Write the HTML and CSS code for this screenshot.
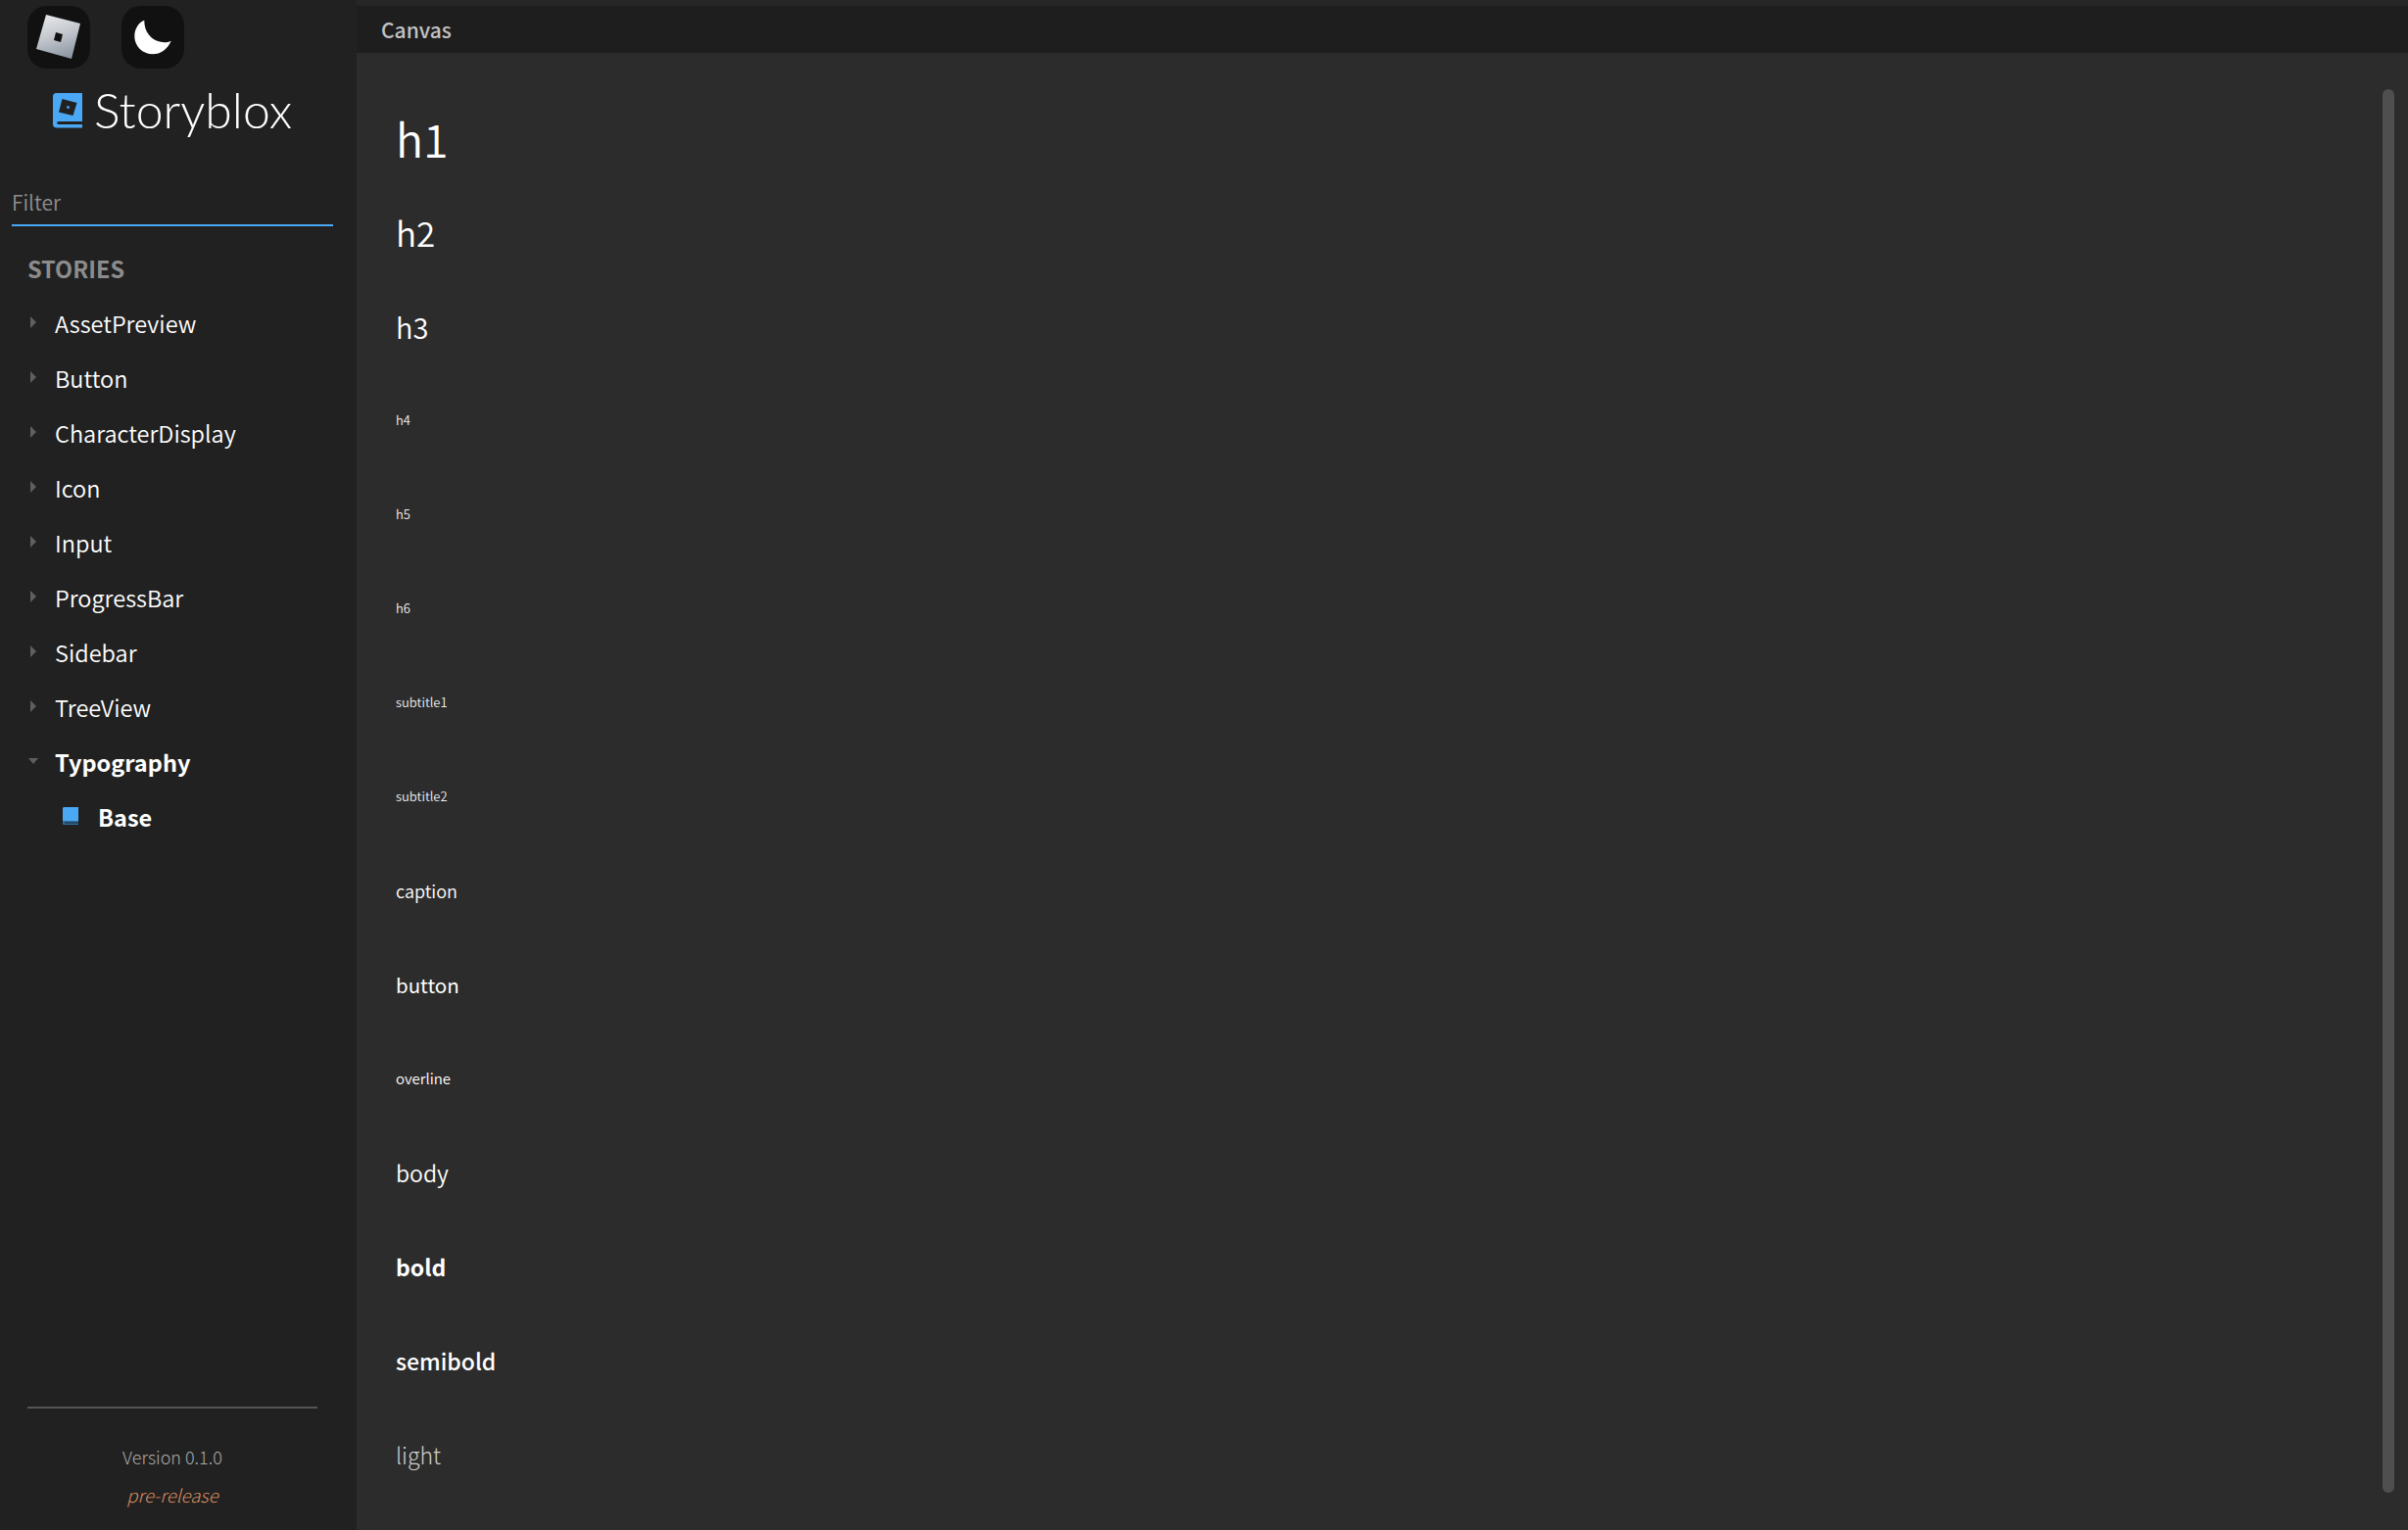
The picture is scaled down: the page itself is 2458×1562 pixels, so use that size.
FILE: index.html
```html
<!DOCTYPE html>
<html lang="en">
<head>
<meta charset="utf-8">
<title>Storyblox</title>
<link rel="stylesheet" href="styles.css">
</head>
<body>
<div class="app">
  <aside class="sidebar">
    <div class="toolbar">
      <button class="icon-btn" aria-label="Roblox">
        <svg width="64" height="64" viewBox="0 0 64 64">
          <defs><linearGradient id="metal" x1="0.2" y1="0" x2="0.5" y2="1"><stop offset="0" stop-color="#e6e7e9"/><stop offset="0.5" stop-color="#c4c8cd"/><stop offset="1" stop-color="#8f99a5"/></linearGradient></defs>
          <path fill="url(#metal)" fill-rule="evenodd" d="M19 9 54 18 45 54 9 44ZM29 27 27 35 34 37 36 29Z"/>
        </svg>
      </button>
      <button class="icon-btn" aria-label="Toggle theme">
        <svg width="64" height="64" viewBox="0 0 64 64">
          <path fill="#fff" d="M23.300 14.700C17 17 13.300 24 13.300 31 13.300 41 21.500 49.300 32 49.300 40 49.300 47 44 50.700 35.700 47 37.500 43 37.500 40 36.800 30 35 23 26 23.300 14.700Z"/>
        </svg>
      </button>
    </div>
    <div class="brand">
      <svg width="30" height="36" viewBox="0 0 30 36">
        <path fill="#4aa8f5" d="M3 0H30V29H6C3.500 29 3.500 32 6 32H30V35.500H4C1.500 35.500 0 34 0 32V3C0 1.500 1.500 0 3 0Z"/>
        <path fill="#212121" fill-rule="evenodd" d="M9.500 6 24.500 10 20.500 23 6 19.500ZM14.500 13 14 15.500 16.500 16 17 13.500Z"/>
      </svg>
      <span class="brand-name">Storyblox</span>
    </div>
    <div class="filter">Filter</div>
    <div class="section-title">STORIES</div>
    <ul class="tree">
      <li class="tree-item"><span class="caret"></span>AssetPreview</li>
      <li class="tree-item"><span class="caret"></span>Button</li>
      <li class="tree-item"><span class="caret"></span>CharacterDisplay</li>
      <li class="tree-item"><span class="caret"></span>Icon</li>
      <li class="tree-item"><span class="caret"></span>Input</li>
      <li class="tree-item"><span class="caret"></span>ProgressBar</li>
      <li class="tree-item"><span class="caret"></span>Sidebar</li>
      <li class="tree-item"><span class="caret"></span>TreeView</li>
      <li class="tree-item is-open"><span class="caret"></span>Typography</li>
      <li class="tree-item is-story">
        <svg class="story-icon" width="16" height="18" viewBox="0 0 16 18">
          <path fill="#4aa8f5" d="M1.500 0H16V14H0V1.500C0 .5.5 0 1.500 0Z"/>
          <path fill="#2f6f9f" d="M0 14H16V18H1.500C.5 18 0 17.500 0 16.500ZM2 15.500V16.500H16V15.500Z"/>
        </svg>Base</li>
    </ul>
    <div class="footer">
      <div class="version">Version 0.1.0</div>
      <div class="release">pre-release</div>
    </div>
  </aside>
  <main class="main">
    <header class="canvas-bar">Canvas</header>
    <section class="canvas">
      <div class="row t-h1">h1</div>
      <div class="row t-h2">h2</div>
      <div class="row t-h3">h3</div>
      <div class="row t-small">h4</div>
      <div class="row t-small">h5</div>
      <div class="row t-small">h6</div>
      <div class="row t-small">subtitle1</div>
      <div class="row t-small">subtitle2</div>
      <div class="row t-caption">caption</div>
      <div class="row t-button">button</div>
      <div class="row t-overline">overline</div>
      <div class="row t-body">body</div>
      <div class="row t-bold">bold</div>
      <div class="row t-semibold">semibold</div>
      <div class="row t-light">light</div>
    </section>
    <div class="scroll-thumb"></div>
  </main>
</div>
</body>
</html>
```
FILE: styles.css
```css
* { box-sizing: border-box; }
html, body { margin: 0; height: 100%; overflow: hidden; }
body {
  background: #212121;
  color: #fff;
  font-family: "Noto Sans CJK SC", "Noto Sans", sans-serif;
}
.app { display: flex; height: 1562px; }

.sidebar {
  width: 364px;
  flex: none;
  display: flex;
  flex-direction: column;
  background: #212121;
}
.toolbar { display: flex; gap: 32px; padding: 6px 0 0 28px; }
.icon-btn {
  width: 64px;
  height: 64px;
  padding: 0;
  border: 0;
  border-radius: 20px;
  background: #111;
  display: block;
}
.icon-btn svg { display: block; }
.brand {
  display: flex;
  align-items: center;
  gap: 12px;
  height: 56px;
  margin-top: 14px;
  padding-left: 54px;
}
.brand svg { flex: none; margin-top: 1px; }
.brand-name {
  font-family: Lato, sans-serif;
  font-weight: 300;
  font-size: 50px;
  line-height: 56px;
}
.filter {
  margin: 49px 24px 0 12px;
  height: 42px;
  border-bottom: 2px solid #4aa8f5;
  color: #8f8f8f;
  font-size: 21px;
  line-height: 34px;
  font-weight: 350;
}
.section-title {
  margin-top: 25px;
  padding-left: 28px;
  color: #8c8c8c;
  font-size: 23.5px;
  font-weight: 700;
  line-height: 36px;
}
.tree { list-style: none; margin: 10px 0 0; padding: 0; }
.tree-item {
  display: flex;
  align-items: center;
  height: 56px;
  padding-left: 31px;
  font-size: 23.5px;
  font-weight: 350;
}
.caret {
  width: 25px;
  height: 12px;
  flex: none;
  margin-top: -2px;
  position: relative;
}
.caret::before {
  content: "";
  display: block;
  width: 0;
  height: 0;
  border-left: 6px solid #5f5f5f;
  border-top: 6px solid transparent;
  border-bottom: 6px solid transparent;
}
.tree-item.is-open { font-weight: 700; }
.is-open .caret::before {
  margin: 3px 0 0 -2px;
  border-top: 6px solid #5f5f5f;
  border-left: 5.500px solid transparent;
  border-right: 5.500px solid transparent;
  border-bottom: 0;
}
.tree-item.is-story { font-weight: 700; padding-left: 64px; }
.story-icon { margin: -3px 20px 0 0; flex: none; }

.footer {
  margin: auto 40px 0 28px;
  height: 126px;
  border-top: 2px solid #555;
  text-align: center;
  font-size: 18px;
}
.version { margin-top: 31px; line-height: 36px; color: #aaa; font-weight: 300; }
.release { margin-top: 3px; line-height: 36px; color: #dc8f63; font-style: italic; font-weight: 300; font-size: 18.5px; }

.main {
  flex: 1;
  min-width: 0;
  position: relative;
  display: flex;
  flex-direction: column;
  background: #2c2c2c;
  border-top: 6px solid #262626;
}
.canvas-bar {
  height: 48px;
  flex: none;
  padding-left: 25px;
  background: #1e1e1e;
  color: #c2c2c2;
  font-size: 21px;
  font-weight: 500;
  line-height: 48px;
}
.canvas { padding: 63px 0 0 40px; font-weight: 350; }
.row { height: 96px; line-height: 48px; }
.t-h1 { font-size: 46.5px; }
.t-h2 { font-size: 35px; }
.t-h3 { font-size: 29px; }
.t-small { font-size: 13px; color: #eee; }
.t-caption { font-size: 18px; }
.t-button { font-size: 20.5px; font-weight: 400; }
.t-overline { font-size: 15px; }
.t-body { font-size: 23px; }
.t-bold { font-size: 23px; font-weight: 700; }
.t-semibold { font-size: 23px; font-weight: 500; }
.t-light { font-size: 23px; font-weight: 300; color: #d0d0d0; }

.scroll-thumb {
  position: absolute;
  top: 85px;
  right: 14px;
  bottom: 38px;
  width: 12px;
  border-radius: 6px;
  background: #4f4f4f;
}
```
